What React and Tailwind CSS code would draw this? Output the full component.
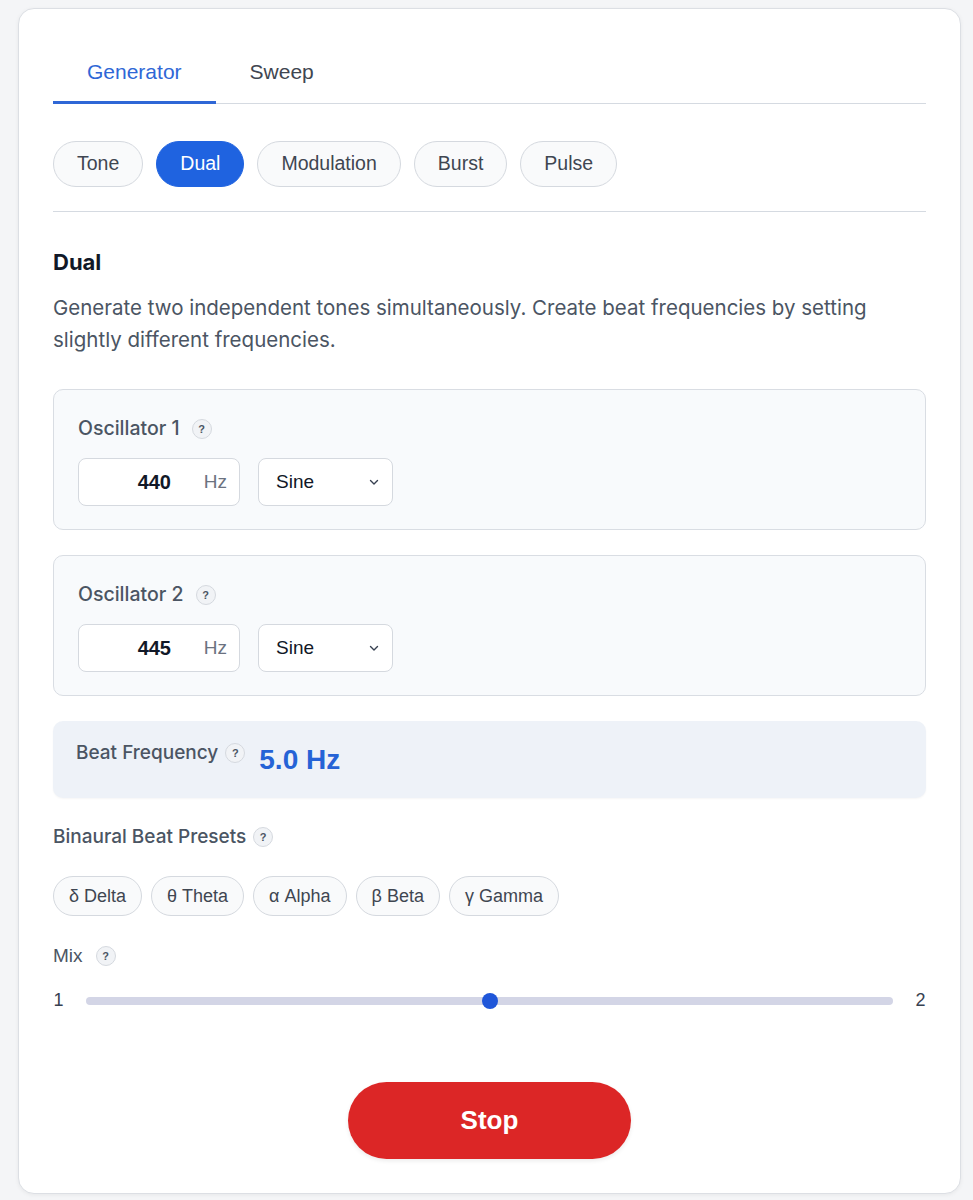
import { useState } from 'react';

const modes = ['Tone', 'Dual', 'Modulation', 'Burst', 'Pulse'];

const presets = [
    { label: 'δ Delta', beat: 2 },
    { label: 'θ Theta', beat: 6 },
    { label: 'α Alpha', beat: 10 },
    { label: 'β Beta', beat: 20 },
    { label: 'γ Gamma', beat: 40 },
];

function HelpBadge() {
    return (
        <span className="inline-flex items-center justify-center w-[20px] h-[20px] rounded-full bg-[#f1f3f6] border border-[#d5d9df] text-[11px] font-bold text-[#4b5563] font-['Liberation_Sans',sans-serif] leading-none">
            ?
        </span>
    );
}

function Oscillator({ title, freq, onFreq }) {
    return (
        <div className="rounded-[10px] border border-[#d9dde3] bg-[#f8fafc] px-[24px] pt-[24px] pb-[23px]">
            <div className="flex items-center gap-[12px] h-[30px] text-[19.5px] font-medium text-[#4b5563]">
                <span>{title}</span>
                <HelpBadge />
            </div>
            <div className="flex gap-[18px] mt-[14px]">
                <div className="flex items-center w-[162px] h-[48px] rounded-[8px] border border-[#d5d9df] bg-white">
                    <input
                        value={freq}
                        onChange={(e) => onFreq(e.target.value)}
                        className="w-[92px] text-right text-[20px] font-bold text-[#111827] bg-transparent outline-none font-['Liberation_Sans',sans-serif]"
                    />
                    <span className="ml-auto pr-[12px] text-[19px] text-[#6b7280] font-['Liberation_Sans',sans-serif]">Hz</span>
                </div>
                <div className="relative w-[135px] h-[48px] rounded-[8px] border border-[#d5d9df] bg-white flex items-center">
                    <span className="pl-[17px] text-[19px] text-[#111827] font-['Liberation_Sans',sans-serif]">Sine</span>
                    <svg className="absolute right-[12px] top-1/2 -translate-y-1/2" width="12" height="12" viewBox="0 0 12 12" fill="none">
                        <path d="M2.5 4.5 L6 8 L9.5 4.5" stroke="#374151" strokeWidth="1.4" strokeLinecap="round" strokeLinejoin="round" />
                    </svg>
                </div>
            </div>
        </div>
    );
}

export default function App() {
    const [tab, setTab] = useState('Generator');
    const [mode, setMode] = useState('Dual');
    const [f1, setF1] = useState('440');
    const [f2, setF2] = useState('445');

    const beat = Math.abs(Number(f2) - Number(f1)).toFixed(1);

    return (
        <div className="min-h-[1200px] bg-[#f4f5f7] pt-[8px] px-[18px] font-['Inter',sans-serif]">
            <div className="w-[943px] h-[1186px] rounded-[16px] border border-[#dcdfe4] bg-white shadow-[0_1px_4px_rgba(0,0,0,0.06)] px-[34px] pt-[34px]">
                {/* tabs */}
                <div className="flex border-b border-[#d5dae1] font-['Liberation_Sans',sans-serif]">
                    {['Generator', 'Sweep'].map((t) => (
                        <button
                            key={t}
                            onClick={() => setTab(t)}
                            className={`h-[61px] px-[34px] text-[21px] -mb-px border-b-[3px] ${
                                tab === t ? 'text-[#2f67d6] border-[#2f67d6]' : 'text-[#3f4651] border-transparent'
                            }`}
                        >
                            {t}
                        </button>
                    ))}
                </div>

                {/* mode pills */}
                <div className="flex gap-[13px] mt-[37px] pb-[24px] border-b border-[#d5dae1] font-['Liberation_Sans',sans-serif]">
                    {modes.map((m) => (
                        <button
                            key={m}
                            onClick={() => setMode(m)}
                            className={`h-[46px] px-[23px] rounded-full text-[19.5px] border ${
                                mode === m
                                    ? 'bg-[#1f63e0] border-[#1f63e0] text-white'
                                    : 'bg-[#f9fafb] border-[#d5d9df] text-[#3f4651]'
                            }`}
                        >
                            {m}
                        </button>
                    ))}
                </div>

                <h2 className="mt-[36px] text-[22px] leading-[28px] font-bold text-[#111827]">Dual</h2>
                <p className="mt-[16px] text-[20.5px] leading-[32px] text-[#4b5563]">
                    Generate two independent tones simultaneously. Create beat frequencies by setting slightly different frequencies.
                </p>

                <div className="mt-[33px] flex flex-col gap-[25px]">
                    <Oscillator title="Oscillator 1" freq={f1} onFreq={setF1} />
                    <Oscillator title="Oscillator 2" freq={f2} onFreq={setF2} />

                    {/* beat readout */}
                    <div className="h-[77px] rounded-[10px] bg-[#eef2f8] shadow-[0_1px_2px_rgba(0,0,0,0.04)] px-[23px] pt-[20px] flex items-start">
                        <div className="flex items-center gap-[7px] h-[24px] text-[19px] font-medium text-[#4b5563]">
                            <span>Beat Frequency</span>
                            <HelpBadge />
                        </div>
                        <span className="ml-[14px] text-[28px] leading-[38px] font-bold text-[#2563d6] font-['Liberation_Sans',sans-serif]">
                            {beat} Hz
                        </span>
                    </div>
                </div>

                {/* presets */}
                <div className="mt-[27px] flex items-center gap-[7px] h-[24px] text-[19px] font-medium text-[#4b5563]">
                    <span>Binaural Beat Presets</span>
                    <HelpBadge />
                </div>
                <div className="mt-[27px] flex gap-[9px] font-['Liberation_Sans',sans-serif]">
                    {presets.map((p) => (
                        <button
                            key={p.label}
                            onClick={() => setF2(String(Number(f1) + p.beat))}
                            className="h-[40px] px-[15px] rounded-full border border-[#d5d9df] bg-[#f9fafb] text-[18px] text-[#3f4651]"
                        >
                            {p.label}
                        </button>
                    ))}
                </div>

                {/* mix */}
                <div className="mt-[28px] flex items-center gap-[13px] h-[24px] text-[19px] text-[#4b5563] font-['Liberation_Sans',sans-serif]">
                    <span>Mix</span>
                    <HelpBadge />
                </div>
                <div className="mt-[19px] flex items-center gap-[22px] text-[18px] text-[#374151] font-['Liberation_Sans',sans-serif]">
                    <span className="w-[11px] text-center">1</span>
                    <div className="relative flex-1 h-[8px] rounded-full bg-[#d3d5e6]">
                        <span className="absolute left-1/2 top-1/2 -translate-x-1/2 -translate-y-1/2 w-[16px] h-[16px] rounded-full bg-[#1f56d9]" />
                    </div>
                    <span className="w-[11px] text-center">2</span>
                </div>

                <div className="mt-[68px] flex justify-center">
                    <button className="w-[283px] h-[77px] rounded-full bg-[#dc2626] text-white text-[26px] font-bold font-['Liberation_Sans',sans-serif] shadow-[0_2px_4px_rgba(0,0,0,0.08)]">
                        Stop
                    </button>
                </div>
            </div>
        </div>
    );
}
